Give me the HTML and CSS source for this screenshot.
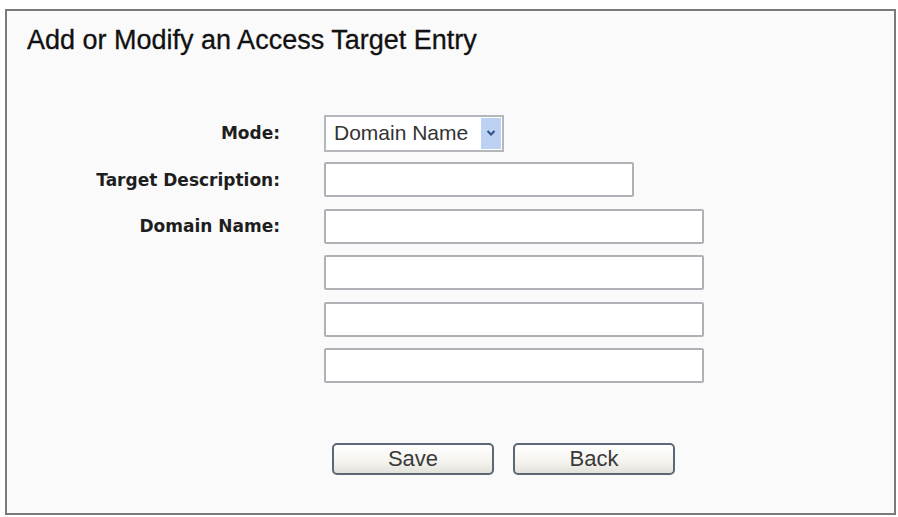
FILE: index.html
```html
<!DOCTYPE html>
<html>
<head>
<title>Access Target Entry</title>
<meta http-equiv="content-type" content="text/html; charset=utf-8" />
<link rel="stylesheet" href="styles.css">
</head>
<body>
<div class="panel">
  <h1 class="title">Add or Modify an Access Target Entry</h1>

  <div class="form">
    <div class="row">
      <div class="label">Mode:</div>
      <div class="select">
        <span class="select-text">Domain Name</span>
        <span class="select-btn">
          <svg width="10" height="8" viewBox="0 0 10 8"><path d="M1.5 2 L5 5.5 L8.5 2" fill="none" stroke="#2d4f8a" stroke-width="2"/></svg>
        </span>
      </div>
    </div>
    <div class="row">
      <div class="label">Target Description:</div>
      <div class="field field-short"></div>
    </div>
    <div class="row">
      <div class="label">Domain Name:</div>
      <div class="field"></div>
    </div>
    <div class="row">
      <div class="label"></div>
      <div class="field"></div>
    </div>
    <div class="row">
      <div class="label"></div>
      <div class="field"></div>
    </div>
    <div class="row">
      <div class="label"></div>
      <div class="field"></div>
    </div>
  </div>

  <div class="buttons">
    <button class="btn">Save</button>
    <button class="btn">Back</button>
  </div>
</div>
</body>
</html>
```

FILE: styles.css
```css
body {margin: 0; background-color: #ffffff; font-family: "Liberation Sans", Arial, sans-serif; color: #222;}
.panel {box-sizing: border-box; width: 891px; height: 506px; margin: 9px 0 0 5px; border: 2px solid #7a7a7a; background-color: #fafafa; padding: 12px 0 0 20px;}
.title {margin: 0; font-size: 27px; font-weight: normal; line-height: 34px; color: #111; -webkit-text-stroke: 0.3px #111;}
.form {margin-top: 53px;}
.row {display: flex; align-items: center; height: 46.5px;}
.label {width: 253px; text-align: right; font-family: "DejaVu Sans", Verdana, sans-serif; font-weight: bold; font-size: 17px; color: #1e1e1e; margin-right: 44px;}
.select {box-sizing: border-box; width: 180px; height: 37px; border: 2px solid #b4b8bc; background: #fff; display: flex; align-items: center; justify-content: space-between; padding: 1px;}
.select-text {font-size: 21px; color: #333; padding-left: 7px;}
.select-btn {width: 20px; height: 31px; background-color: #bdd2f2; display: flex; align-items: center; justify-content: center;}
.field {box-sizing: border-box; width: 380px; height: 35px; border: 2px solid #aeb2b6; border-radius: 2px; background: #fff;}
.field-short {width: 310px;}
.buttons {display: flex; gap: 19px; margin: 54px 0 0 305px;}
.btn {box-sizing: border-box; width: 162px; height: 32px; border: 2px solid #5c6875; border-radius: 5px; background: linear-gradient(#ffffff, #f4f3ee 60%, #e3e1da); font-family: "Liberation Sans", Arial, sans-serif; font-size: 22px; line-height: 26px; color: #3a3a3a; padding: 0;}
```
